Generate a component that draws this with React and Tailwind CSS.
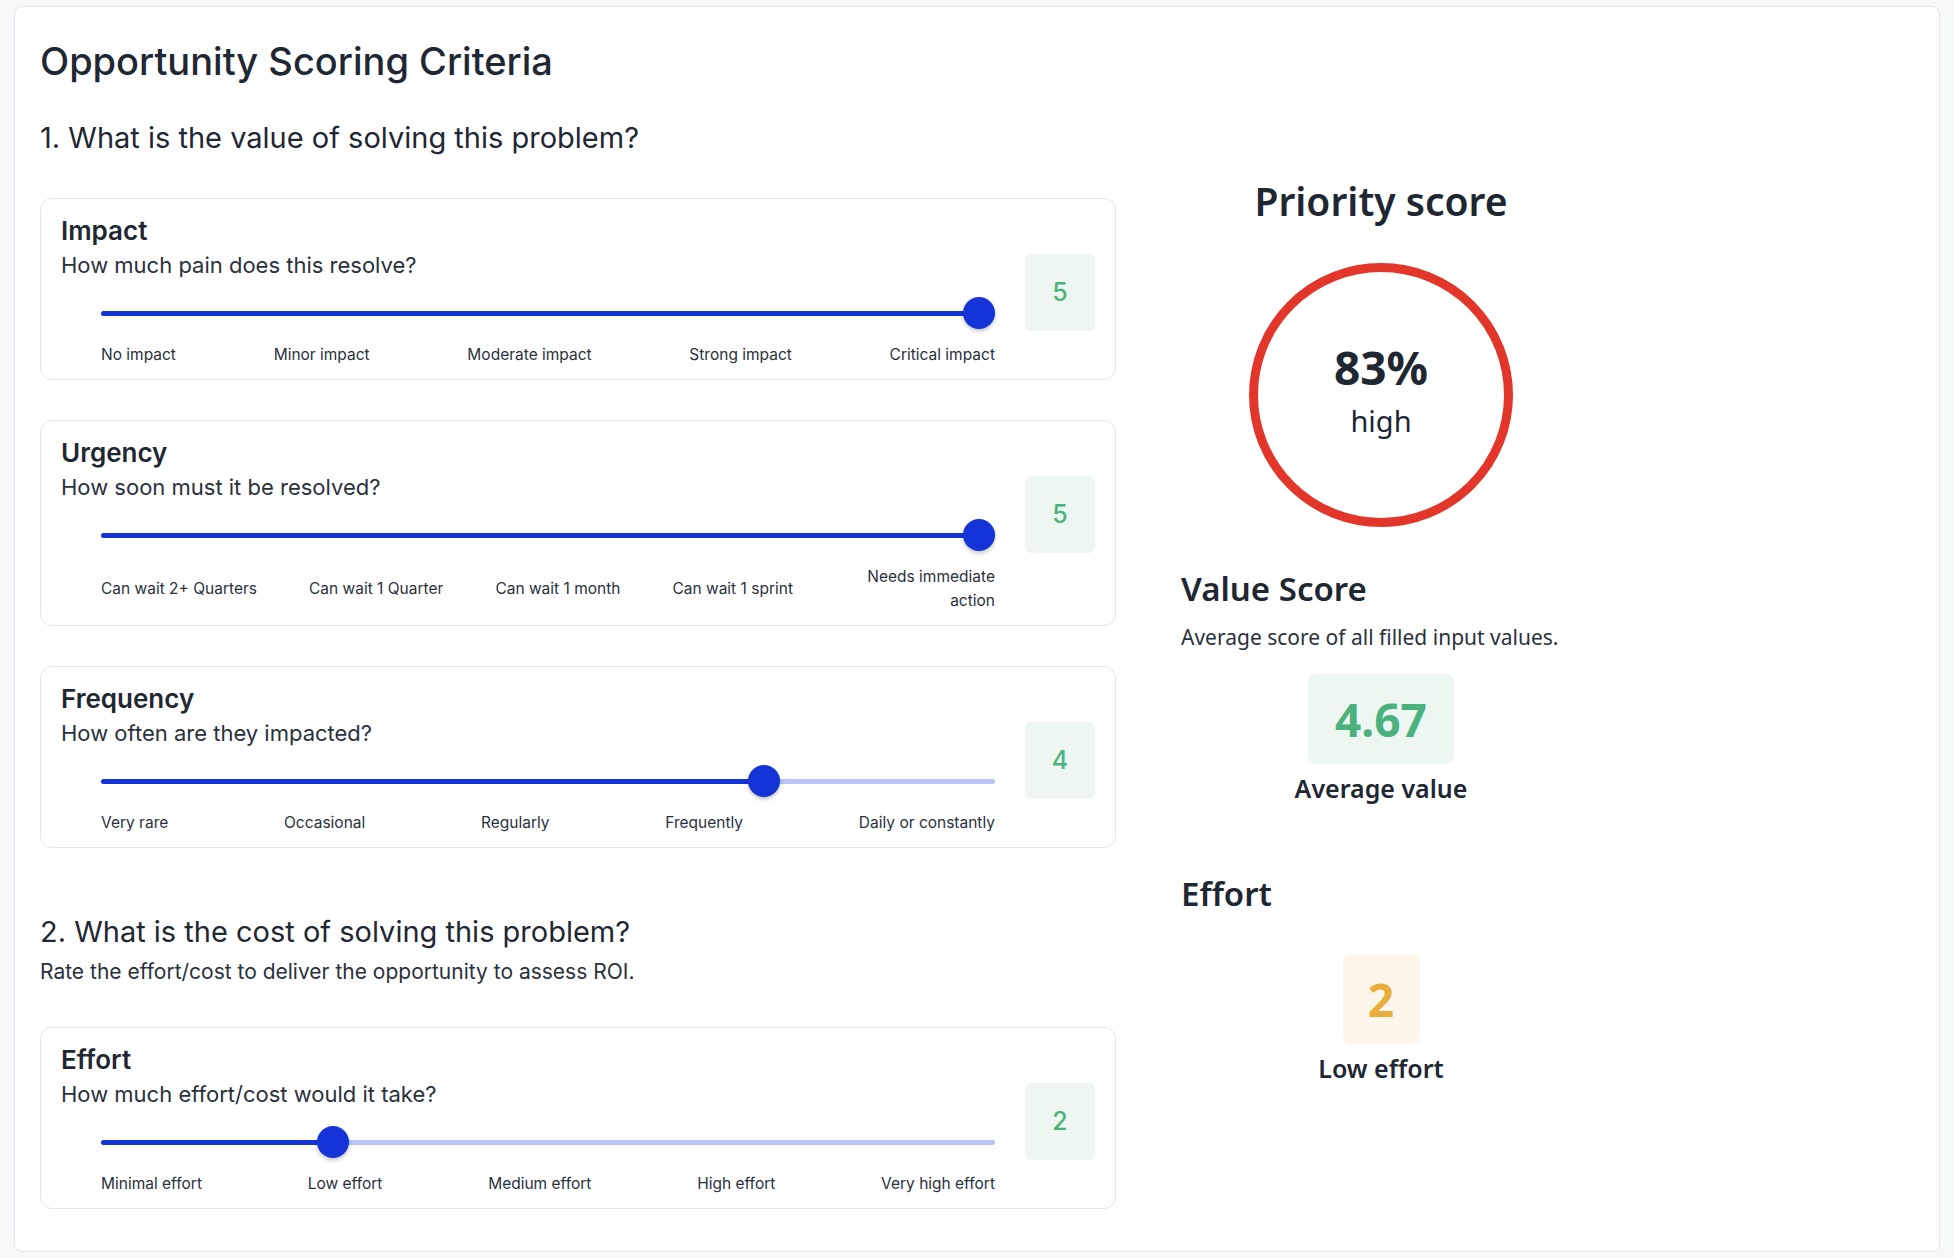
const criteria = [
  {
    title: "Impact",
    question: "How much pain does this resolve?",
    value: 5,
    labels: ["No impact", "Minor impact", "Moderate impact", "Strong impact", "Critical impact"],
  },
  {
    title: "Urgency",
    question: "How soon must it be resolved?",
    value: 5,
    labels: ["Can wait 2+ Quarters", "Can wait 1 Quarter", "Can wait 1 month", "Can wait 1 sprint", "Needs immediate action"],
  },
  {
    title: "Frequency",
    question: "How often are they impacted?",
    value: 4,
    labels: ["Very rare", "Occasional", "Regularly", "Frequently", "Daily or constantly"],
  },
];

const effort = {
  title: "Effort",
  question: "How much effort/cost would it take?",
  value: 2,
  labels: ["Minimal effort", "Low effort", "Medium effort", "High effort", "Very high effort"],
};

function Slider({ value }) {
  const frac = (value - 1) / 4;
  const thumb = `calc(16px + (100% - 32px) * ${frac})`;
  return (
    <div className="relative h-8 flex items-center">
      <div className="h-[5px] w-full rounded-full bg-[#b9c6f5]" />
      <div className="absolute left-0 h-[5px] rounded-full bg-[#1434d8]" style={{ width: thumb }} />
      <div
        className="absolute h-8 w-8 -ml-4 rounded-full bg-[#1434d8] shadow-[0_2px_4px_rgba(0,0,0,0.25)]"
        style={{ left: thumb }}
      />
    </div>
  );
}

function Card({ item }) {
  return (
    <div className="flex rounded-xl border border-[#e3e6ea] bg-white pl-5 pr-5 pt-4 pb-[12px]">
      <div className="flex-1">
        <div className="text-[26px] leading-8 font-semibold text-[#1f2733]">{item.title}</div>
        <div className="mt-1 text-[22px] leading-7 text-[#2a313b]">{item.question}</div>
        <div className="ml-10 mt-[18px] w-[894px]">
          <Slider value={item.value} />
          <div className="mt-[14px] flex items-center justify-between text-[15.5px] leading-6 text-[#2a313b]">
            {item.labels.map((l, i) => (
              <span key={l} className={i === 4 ? "max-w-[150px] text-right" : ""}>
                {l}
              </span>
            ))}
          </div>
        </div>
      </div>
      <div className="mt-[39px] flex h-[77px] w-[70px] shrink-0 items-center justify-center self-start rounded-md bg-[#edf6f0] text-[25px] font-medium text-[#4cb27d]">
        {item.value}
      </div>
    </div>
  );
}

export default function App() {
  return (
    <div className="min-h-screen bg-[#f7f8fa] px-[14px] pt-[6px] pb-[6px]" style={{ fontFamily: "Inter, 'Noto Sans', sans-serif" }}>
      <div className="flex h-[1246px] gap-[65px] rounded-lg border border-[#e3e6ea] bg-white pl-[25px] pt-[30px]">
        <div className="w-[1076px]">
          <h1 className="text-[38px] leading-[48px] font-medium text-[#1f2733]">Opportunity Scoring Criteria</h1>
          <h2 className="mt-[35px] text-[29px] leading-9 text-[#1f2733]">1. What is the value of solving this problem?</h2>
          <div className="mt-[42px] flex flex-col gap-10">
            {criteria.map((c) => (
              <Card key={c.title} item={c} />
            ))}
          </div>
          <h2 className="mt-[66px] text-[29px] leading-9 text-[#1f2733]">2. What is the cost of solving this problem?</h2>
          <p className="mt-[9px] text-[21px] leading-[26px] text-[#2a313b]">Rate the effort/cost to deliver the opportunity to assess ROI.</p>
          <div className="mt-[42px]">
            <Card item={effort} />
          </div>
        </div>
        <div className="w-[420px] pt-[140px] text-[#1f2733]" style={{ fontFamily: "'Noto Sans', sans-serif" }}>
          <div className="w-[400px] text-center text-[39px] leading-[48px] font-semibold">Priority score</div>
          <div className="mt-[38px] flex w-[400px] justify-center">
            <div className="flex h-[264px] w-[264px] flex-col items-center justify-center rounded-full border-[9px] border-[#e3362a]">
              <div className="-mt-3 text-[46px] leading-[56px] font-bold">83%</div>
              <div className="mt-2 text-[29px] leading-9">high</div>
            </div>
          </div>
          <div className="mt-[42px] text-[33px] leading-10 font-semibold">Value Score</div>
          <div className="mt-[14px] text-[21px] leading-7 text-[#2a313b] whitespace-nowrap">Average score of all filled input values.</div>
          <div className="flex w-[400px] flex-col items-center">
            <div className="mt-[23px] flex h-[90px] w-[146px] items-center justify-center rounded-lg bg-[#edf6f0] text-[46px] font-bold text-[#4cb27d]">
              4.67
            </div>
            <div className="mt-[8px] text-[25px] leading-8 font-semibold">Average value</div>
          </div>
          <div className="mt-[70px] text-[33px] leading-10 font-semibold">Effort</div>
          <div className="flex w-[400px] flex-col items-center">
            <div className="mt-[40px] flex h-[90px] w-[77px] items-center justify-center rounded-lg bg-[#fdf5e9] text-[46px] font-bold text-[#e9ad3b]">
              2
            </div>
            <div className="mt-[8px] text-[25px] leading-8 font-semibold">Low effort</div>
          </div>
        </div>
      </div>
    </div>
  );
}
